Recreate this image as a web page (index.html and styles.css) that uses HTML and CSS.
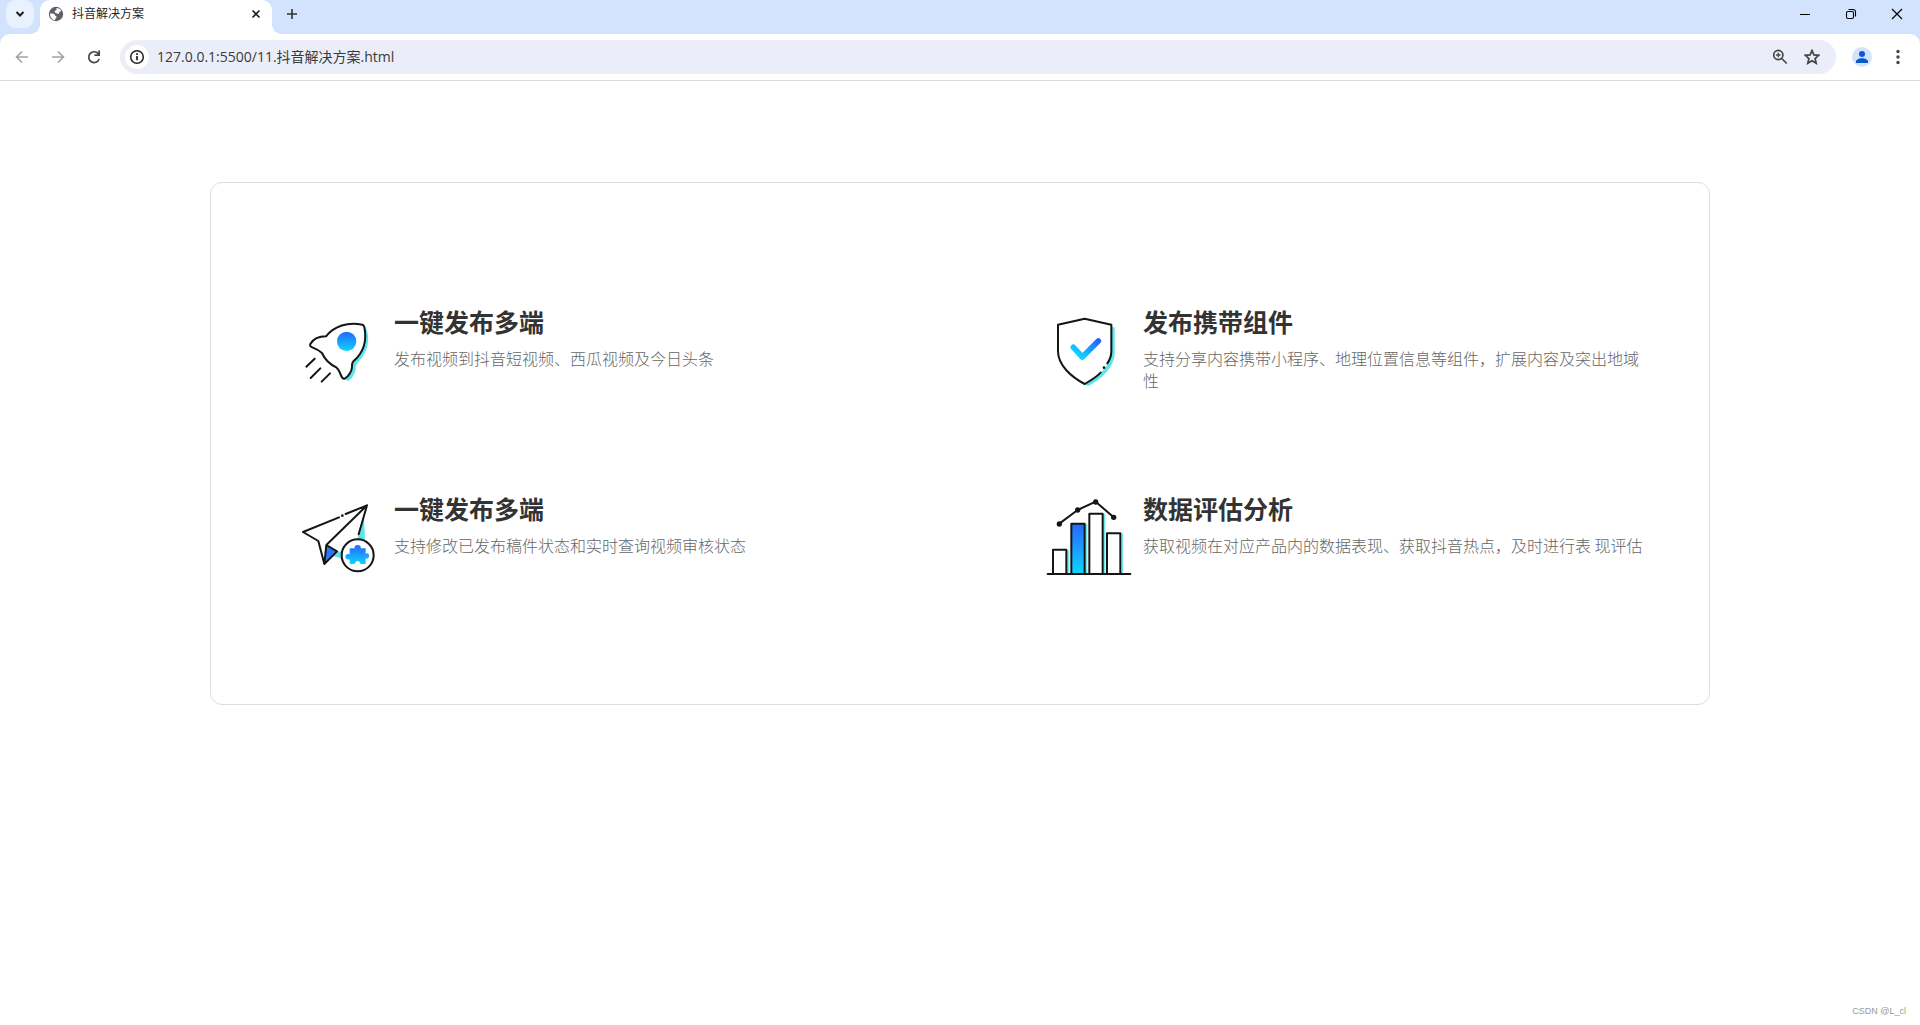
FILE: index.html
```html
<!DOCTYPE html>
<html lang="zh-CN">
<head>
<meta charset="utf-8">
<meta name="viewport" content="width=device-width, initial-scale=1">
<title>抖音解决方案</title>
<link rel="stylesheet" href="styles.css">
</head>
<body>
<header class="browser">
  <div class="tab-strip">
    <button class="tab-search" type="button" aria-label="搜索标签页">
      <svg width="10" height="10" viewBox="0 0 10 10"><path d="M1.500 3l3.500 3.500L8.500 3" fill="none" stroke="#1f1f1f" stroke-width="2"/></svg>
    </button>
    <div class="tab">
      <svg width="16" height="16" viewBox="0 0 16 16"><circle cx="8" cy="8" r="7.200" fill="#5f6368"/><path d="M2 7.500c2.500-.3 5 .2 5 1.500 0 1.200 1.500.8 1.500 2 0 1.300-1.500 1.200-1.500 3.200C4 13.800 1.800 11 2 7.500zM8.500 2c2 0 4 1 4.800 2.800-.6 1-1.800.5-2 1.700-.3 1.300-1 1.500-2.300 1-1.200-.5-2.500-.8-2.300-2 .2-1.100 1.600-.8 1.800-1.700z" fill="#fff"/></svg>
      <span class="tab-title">抖音解决方案</span>
      <button class="icon-button" type="button" aria-label="关闭标签页">
        <svg width="10" height="10" viewBox="0 0 10 10"><path d="M1.500 1.500l7 7M8.500 1.500l-7 7" stroke="#1f1f1f" stroke-width="1.600"/></svg>
      </button>
    </div>
    <button class="icon-button new-tab" type="button" aria-label="新标签页">
      <svg width="12" height="12" viewBox="0 0 12 12"><path d="M6 1v10M1 6h10" stroke="#333" stroke-width="1.600"/></svg>
    </button>
    <div class="window-controls">
      <button class="icon-button" type="button" aria-label="最小化"><svg width="12" height="12" viewBox="0 0 12 12"><path d="M1 6.500h10" stroke="#000"/></svg></button>
      <button class="icon-button" type="button" aria-label="还原"><svg width="12" height="12" viewBox="0 0 12 12" fill="none" stroke="#000" stroke-width="1.100"><rect x="1.500" y="3.500" width="7" height="7" rx="1.500"/><path d="M3.500 1.500h4.500a2.500 2.500 0 0 1 2.500 2.500v4.500"/></svg></button>
      <button class="icon-button" type="button" aria-label="关闭"><svg width="12" height="12" viewBox="0 0 12 12"><path d="M1 1l10 10M11 1L1 11" stroke="#000" stroke-width="1.200"/></svg></button>
    </div>
  </div>
  <div class="toolbar">
    <nav class="history">
      <button class="icon-button" type="button" aria-label="后退"><svg width="16" height="16" viewBox="0 0 16 16"><path d="M14 8H3M8 2.500L2.500 8 8 13.500" fill="none" stroke="#a3a3a3" stroke-width="1.600"/></svg></button>
      <button class="icon-button" type="button" aria-label="前进"><svg width="16" height="16" viewBox="0 0 16 16"><path d="M2 8h11M8 2.500L13.500 8 8 13.500" fill="none" stroke="#a3a3a3" stroke-width="1.600"/></svg></button>
      <button class="icon-button" type="button" aria-label="重新加载"><svg width="16" height="16" viewBox="0 0 16 16"><path d="M13.200 10a5.400 5.400 0 1 1-.9-5.300L13.500 6" fill="none" stroke="#444" stroke-width="1.700"/><path d="M14 1.500V7H8.500V5.300h3.700V1.500z" fill="#444"/></svg></button>
    </nav>
    <div class="address">
      <button class="site-info" type="button" aria-label="网站信息"><svg width="16" height="16" viewBox="0 0 16 16"><circle cx="8" cy="8" r="6.300" fill="none" stroke="#1f1f1f" stroke-width="1.500"/><path d="M8 7v4.300M8 4.300v1.600" stroke="#1f1f1f" stroke-width="1.700"/></svg></button>
      <input class="url" type="text" aria-label="地址栏" value="127.0.0.1:5500/11.抖音解决方案.html">
      <button class="icon-button" type="button" aria-label="缩放"><svg width="16" height="16" viewBox="0 0 16 16" fill="none" stroke="#444" stroke-width="1.700"><circle cx="6.300" cy="6" r="4.600"/><path d="M9.700 9.500l5 5"/><path d="M6.300 3.800v4.400M4.100 6h4.400" stroke-width="1.300"/></svg></button>
      <button class="icon-button" type="button" aria-label="加入书签"><svg width="16" height="16" viewBox="0 0 16 16"><path d="M8 1.500l1.900 4.400 4.800.4-3.600 3.200 1.100 4.700L8 11.700l-4.200 2.500 1.100-4.700L1.300 6.300l4.800-.4z" fill="none" stroke="#444" stroke-width="1.700"/></svg></button>
    </div>
    <button class="icon-button profile" type="button" aria-label="个人资料"><svg width="20" height="20" viewBox="0 0 20 20"><circle cx="10" cy="10" r="10" fill="#d3e3fd"/><circle cx="10" cy="7" r="3" fill="#0b57d0"/><path d="M4 16v-1.500c0-2 3-3.300 6-3.300s6 1.300 6 3.300V16z" fill="#0b57d0"/></svg></button>
    <button class="icon-button" type="button" aria-label="菜单"><svg width="16" height="16" viewBox="0 0 16 16" fill="#444"><circle cx="8" cy="2.500" r="1.700"/><circle cx="8" cy="8" r="1.700"/><circle cx="8" cy="13.500" r="1.700"/></svg></button>
  </div>
</header>

<main class="page">
  <section class="card">
    <article class="feature">
      <svg class="feature-icon" viewBox="15 45 270 264" aria-hidden="true">
        <defs><linearGradient id="blue" x1="0" y1="0" x2="0" y2="1"><stop offset="0" stop-color="#2468ff"/><stop offset="1" stop-color="#0fd3ff"/></linearGradient></defs>
        <path d="M228 112c12 34 10 70-26 108-5 5-5 10-5 17-2 14-11 33-25 36l-8-8 20-45 30-50z" fill="#5ce5ea"/>
        <path d="M108 139c25-31 65-44 109-35 4 1 5 3 6 7 9 45-6 80-33 103-5 5-4 10-4 16 0 11-8 28-22 36-5 1-9-3-12-12-4-11-6-16-12-21-26-13-36-25-44-44-10-9-16-12-29-17-6-2-8-5-6-10 10-17 25-23 47-23z" fill="#fff" stroke="#151515" stroke-width="6" stroke-linejoin="round"/>
        <circle cx="170" cy="154" r="29" fill="url(#blue)"/>
        <path d="M49 230l25-24M62 264l29-29M95 275l25-25" stroke="#151515" stroke-width="6" stroke-linecap="round"/>
      </svg>
      <div class="feature-text">
        <h2>一键发布多端</h2>
        <p>发布视频到抖音短视频、西瓜视频及今日头条</p>
      </div>
    </article>
    <article class="feature">
      <svg class="feature-icon" viewBox="42 45 270 264" aria-hidden="true">
        <defs><linearGradient id="tick" x1="0" y1="1" x2="1" y2="0"><stop offset=".2" stop-color="#0fd0ff"/><stop offset="1" stop-color="#2464ff"/></linearGradient></defs>
        <path d="M244 109l10 4v75c0 42-38 79-80 100l-12-5 45-52z" fill="#5ce5ea"/>
        <path d="M164 86l80 18v80c0 42-40 77-80 98-40-21-80-56-80-98v-80z" fill="#fff"/>
        <path d="M232 220c8-11 12-22 12-36v-80l-80-18-80 18v80c0 42 40 77 80 98 18-10 35-21 48-34" fill="none" stroke="#151515" stroke-width="6" stroke-linecap="round" stroke-linejoin="round"/>
        <circle cx="222" cy="233" r="4" fill="#151515"/>
        <path d="M130 172l27 29 48-48" fill="none" stroke="url(#tick)" stroke-width="17" stroke-linecap="round" stroke-linejoin="round"/>
      </svg>
      <div class="feature-text">
        <h2>发布携带组件</h2>
        <p>支持分享内容携带小程序、地理位置信息等组件，扩展内容及突出地域性</p>
      </div>
    </article>
    <article class="feature">
      <svg class="feature-icon" viewBox="15 36 270 264" aria-hidden="true">
        <path d="M222 113l3 67-23-4zM140 212l22 6-8 17-30-8z" fill="#5ce5ea"/>
        <path d="M108 195l32 18-37 35z" fill="#2878ff"/>
        <path d="M147 112L39 156l46 27 18 69 38-38-32-19L231 76l-64 26M231 76l-25 87M109 195l-6 56" fill="none" stroke="#151515" stroke-width="6" stroke-linecap="round" stroke-linejoin="round"/>
        <circle cx="157" cy="107" r="4" fill="#151515"/>
        <circle cx="203" cy="226" r="48" fill="#fff" stroke="#151515" stroke-width="6"/>
        <path d="M179 205h15c-4-13 22-13 18 0h15v16c14-6 14 20 0 14v17h-16c0-12-16-12-16 0h-16v-14c-17 5-17-21 0-15z" fill="url(#blue)"/>
      </svg>
      <div class="feature-text">
        <h2>一键发布多端</h2>
        <p>支持修改已发布稿件状态和实时查询视频审核状态</p>
      </div>
    </article>
    <article class="feature">
      <svg class="feature-icon" viewBox="42 36 270 264" aria-hidden="true">
        <path d="M111 211h7v70h-7zM166 133h6v148h-6zM220 102h6v179h-6zM274 160h5v121h-5z" fill="#72e8ec"/>
        <g stroke="#151515" stroke-width="6" stroke-linejoin="round">
          <path d="M69 209h40v73H69zM178 101h40v181h-40zM231 160h40v122h-40z" fill="#fff"/>
          <path d="M124 131h40v151h-40z" fill="url(#blue)"/>
          <path d="M53 282h248M88 131l55-41 54-25 54 47" fill="none" stroke-linecap="round"/>
        </g>
        <g fill="#151515"><circle cx="88" cy="132" r="8"/><circle cx="143" cy="90" r="8"/><circle cx="197" cy="66" r="8"/><circle cx="251" cy="112" r="8"/></g>
      </svg>
      <div class="feature-text">
        <h2>数据评估分析</h2>
        <p>获取视频在对应产品内的数据表现、获取抖音热点，及时进行表 现评估</p>
      </div>
    </article>
  </section>
</main>
<footer class="credit">CSDN @L_cl</footer>
</body>
</html>
```
FILE: styles.css
```css
* {
  box-sizing: border-box;
}

body {
  display: flex;
  flex-direction: column;
  min-height: 100vh;
  margin: 0;
  background: #fff;
  color: #333;
  font-family: "Open Sans", "Noto Sans CJK SC", sans-serif;
}

button {
  padding: 0;
  border: 0;
  background: none;
}

svg {
  display: block;
  flex: none;
}

.browser {
  background: #d3e3fd;
}

.tab-strip {
  display: flex;
  align-items: flex-start;
  height: 34px;
}

.tab-search {
  display: flex;
  align-items: center;
  justify-content: center;
  width: 28px;
  height: 28px;
  margin: 0 6px;
  border-radius: 10px;
  background: #e9f1fe;
}

.tab {
  position: relative;
  display: flex;
  align-items: center;
  gap: 8px;
  width: 232px;
  height: 34px;
  padding: 0 6px 6px 8px;
  border-radius: 10px 10px 0 0;
  background: #fff;
}

.tab::before,
.tab::after {
  position: absolute;
  bottom: 0;
  width: 10px;
  height: 10px;
  content: "";
}

.tab::before {
  right: 100%;
  background: radial-gradient(circle at 0 0, transparent 10px, #fff 10px);
}

.tab::after {
  left: 100%;
  background: radial-gradient(circle at 100% 0, transparent 10px, #fff 10px);
}

.tab-title {
  flex: 1;
  color: #1f1f1f;
  font-size: 12px;
  line-height: 20px;
}

.icon-button {
  display: flex;
  align-items: center;
  justify-content: center;
  width: 20px;
  height: 28px;
}

.new-tab {
  margin-left: 10px;
}

.window-controls {
  display: flex;
  margin-left: auto;
}

.window-controls .icon-button {
  width: 46px;
}

.toolbar {
  display: flex;
  align-items: center;
  height: 47px;
  padding: 0 12px;
  border-bottom: 1px solid #dcdcdc;
  border-radius: 10px 10px 0 0;
  background: #fff;
}

.history {
  display: flex;
  gap: 16px;
  margin-right: 16px;
}

.address {
  display: flex;
  flex: 1;
  align-items: center;
  gap: 12px;
  height: 34px;
  padding: 0 14px 0 5px;
  border-radius: 17px;
  background: #ebeef8;
}

.site-info {
  display: flex;
  align-items: center;
  justify-content: center;
  width: 24px;
  height: 24px;
  border-radius: 50%;
  background: #fff;
}

.url {
  flex: 1;
  min-width: 0;
  height: 24px;
  margin-left: -4px;
  padding: 0 0 2px;
  border: 0;
  outline: 0;
  background: none;
  color: #3a3a3a;
  font-family: inherit;
  font-size: 14px;
}

.profile {
  margin: 0 16px;
}

.page {
  flex: 1;
  padding: 101px 24px 24px;
}

.card {
  display: grid;
  grid-template-columns: 1fr 1fr;
  row-gap: 99px;
  max-width: 1500px;
  margin: 0 auto;
  padding: 122px 0 124px;
  border: 1px solid #ddd;
  border-radius: 12px;
}

.feature {
  display: flex;
  gap: 9px;
  padding: 0 57px 0 84px;
}

.feature-icon {
  width: 90px;
  height: 88px;
}

.feature-text {
  flex: 1;
}

.feature h2 {
  margin: 0 0 10px;
  font-family: "Noto Sans CJK SC", sans-serif;
  font-size: 25px;
  font-weight: 700;
  line-height: 32px;
}

.feature p {
  margin: 0;
  color: #666;
  font-family: "Noto Sans CJK SC", sans-serif;
  font-size: 16px;
  font-weight: 300;
  line-height: 22px;
}

.credit {
  padding: 0 14px 6px;
  color: #999;
  font-family: "Liberation Sans", sans-serif;
  font-size: 9px;
  line-height: 16px;
  text-align: right;
}
```
